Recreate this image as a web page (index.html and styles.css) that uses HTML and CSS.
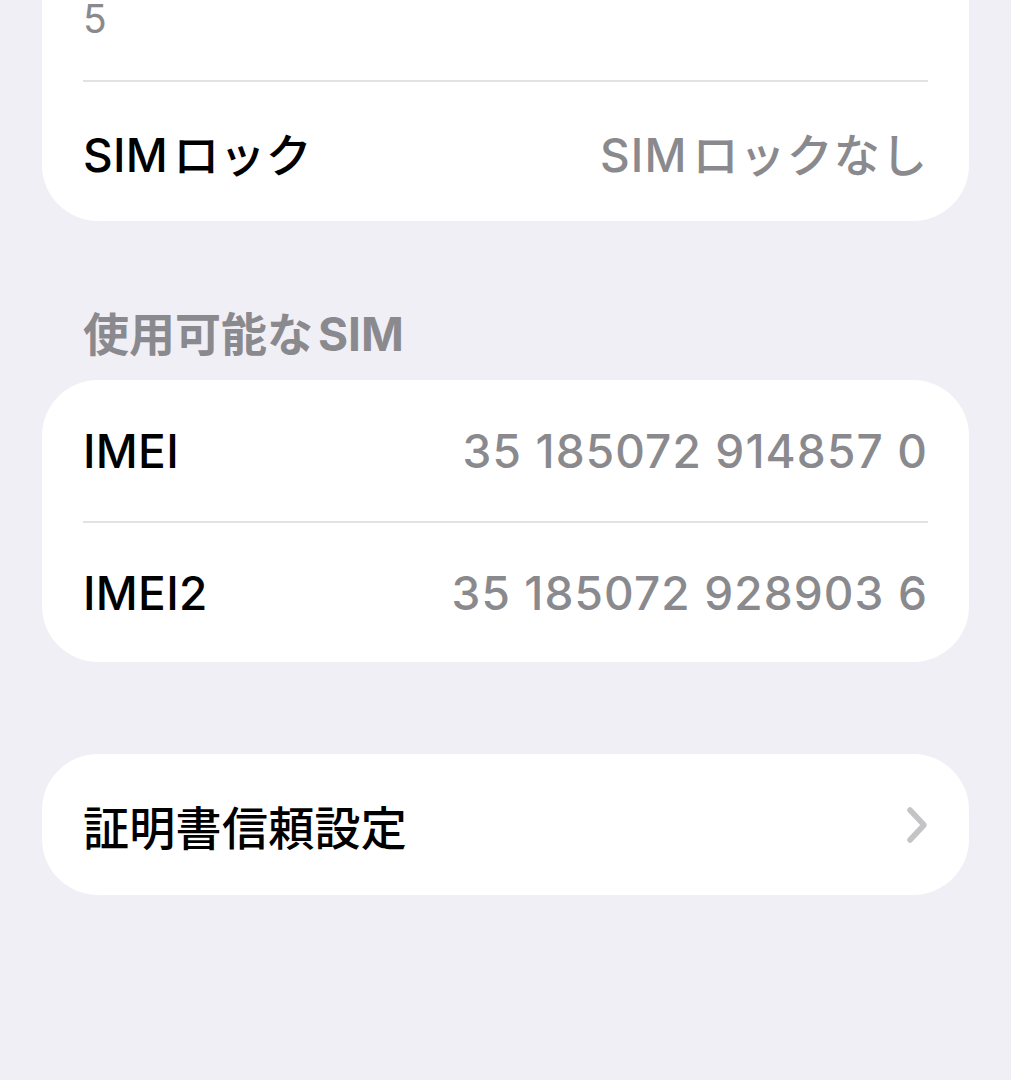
FILE: index.html
```html
<!DOCTYPE html>
<html lang="ja">
<head>
    <meta charset="UTF-8">
    <meta name="viewport" content="width=device-width, initial-scale=1.0">
    <title>情報</title>
    <link rel="stylesheet" href="styles.css">
</head>
<body>
    <main class="page">
        <div class="group group-cut">
            <div class="row row-sub">
                <span class="sub-value">5</span>
            </div>
            <div class="row">
                <span class="label">SIM<span class="gap"></span>ロック</span>
                <span class="value">SIM<span class="gap"></span>ロックなし</span>
            </div>
        </div>

        <h2 class="group-title">使用可能な<span class="gap"></span>SIM</h2>
        <div class="group">
            <div class="row">
                <span class="label">IMEI</span>
                <span class="value">35 185072 914857 0</span>
            </div>
            <div class="row">
                <span class="label">IMEI2</span>
                <span class="value">35 185072 928903 6</span>
            </div>
        </div>

        <div class="group group-link">
            <div class="row">
                <span class="label">証明書信頼設定</span>
                <svg class="chevron" width="26" height="40" viewBox="0 0 26 40">
                    <path d="M6 5 L20 20 L6 35" fill="none" stroke="#c4c4c7" stroke-width="5.5" stroke-linecap="round" stroke-linejoin="round"/>
                </svg>
            </div>
        </div>
    </main>
</body>
</html>
```

FILE: styles.css
```css
body {
    margin: 0;
    padding: 0;
    background-color: #f0eff5;
    font-family: Inter, "Noto Sans CJK JP", sans-serif;
    color: #000;
}
.page {
    padding: 0 42px;
    height: 1080px;
    box-sizing: border-box;
}
.group {
    background: #fff;
    border-radius: 56px;
    padding: 0 41px;
}
.group-cut {
    border-radius: 0 0 56px 56px;
}
.row {
    display: flex;
    align-items: center;
    justify-content: space-between;
    height: 141px;
    border-top: 2px solid #e2e2e6;
    box-sizing: border-box;
}
.row:first-child {
    border-top: none;
}
.row-sub {
    height: 80px;
    align-items: flex-start;
}
.sub-value {
    font-size: 39px;
    color: #8a8a8e;
    line-height: 38px;
}
.gap {
    display: inline-block;
    width: 5px;
}
.label {
    font-size: 46px;
    font-weight: 500;
    letter-spacing: 0.3px;
}
.value {
    font-size: 46px;
    font-weight: 500;
    color: #8a8a8e;
    letter-spacing: 1.1px;
}
.group-title {
    margin: 0;
    padding: 89px 41px 22px;
    font-size: 46px;
    line-height: 48px;
    font-weight: 700;
    color: #8a8a8e;
}
.group-link {
    margin-top: 92px;
}
.chevron {
    display: block;
    margin-right: -2px;
}
```
